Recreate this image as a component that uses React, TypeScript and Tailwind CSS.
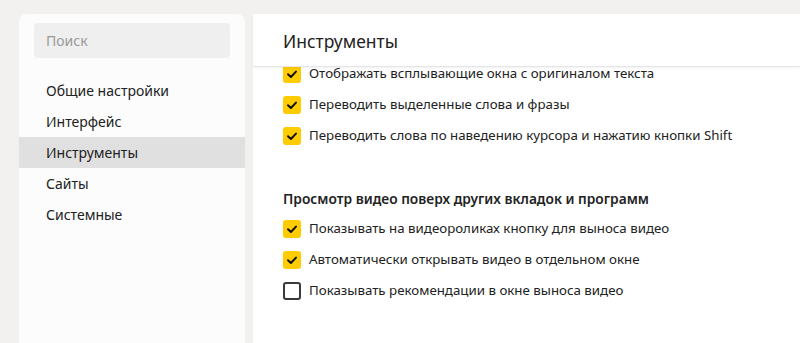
const nav = ["Общие настройки", "Интерфейс", "Инструменты", "Сайты", "Системные"];

const translate = [
  { label: "Отображать всплывающие окна с оригиналом текста", checked: true },
  { label: "Переводить выделенные слова и фразы", checked: true },
  { label: "Переводить слова по наведению курсора и нажатию кнопки Shift", checked: true },
];

const video = [
  { label: "Показывать на видеороликах кнопку для выноса видео", checked: true },
  { label: "Автоматически открывать видео в отдельном окне", checked: true },
  { label: "Показывать рекомендации в окне выноса видео", checked: false },
];

function Checkbox({ checked }: { checked: boolean }) {
  if (!checked) {
    return <span className="h-[18px] w-[18px] shrink-0 rounded-[3px] border-2 border-[#3a3a3a] bg-white" />;
  }
  return (
    <span className="flex h-[18px] w-[18px] shrink-0 items-center justify-center rounded-[3px] bg-[#ffcc00]">
      <svg viewBox="0 0 18 18" className="h-[18px] w-[18px]" aria-hidden>
        <path d="M5 9.2 L7.9 12 L13 6.6" fill="none" stroke="#111" strokeWidth="2" strokeLinecap="round" strokeLinejoin="round" />
      </svg>
    </span>
  );
}

function Row({ label, checked }: { label: string; checked: boolean }) {
  return (
    <label className="flex h-[31px] items-center gap-2">
      <Checkbox checked={checked} />
      <span className="whitespace-nowrap text-[13.3px] text-[#222]">{label}</span>
    </label>
  );
}

export default function App() {
  return (
    <div
      className="flex h-[343px] gap-2 overflow-hidden bg-[#f2f1ef] pl-[19px] pt-[14px]"
      style={{ fontFamily: '"Noto Sans", "Open Sans", sans-serif' }}
    >
      <aside className="flex w-[226px] shrink-0 flex-col rounded-t-lg bg-[#fcfcfc] pt-[9px]">
        <div className="mx-[15px] flex h-[35px] items-center rounded-[4px] bg-[#efefef] pl-3 text-[14px] text-[#9a9a9a]">
          Поиск
        </div>
        <nav className="mt-[17px] flex flex-col">
          {nav.map((item) => (
            <a
              key={item}
              href="#"
              className={
                "flex h-[31px] items-center pl-[27px] text-[14px] text-[#222] " +
                (item === "Инструменты" ? "bg-[#e0e0e0]" : "")
              }
            >
              {item}
            </a>
          ))}
        </nav>
      </aside>

      <main className="flex min-w-0 flex-1 flex-col rounded-tl-lg bg-white">
        <header className="relative z-10 flex h-[53px] shrink-0 items-center border-b border-[#e6e6e6] bg-white pl-[30px] pt-[3px] shadow-[0_1px_2px_rgba(0,0,0,0.06)]">
          <h1 className="text-[17.5px] text-[#222]">Инструменты</h1>
        </header>
        <div className="flex-1 overflow-hidden pl-[30px]">
          <div className="-mt-[9px]">
            {translate.map((r) => (
              <Row key={r.label} {...r} />
            ))}
            <h2 className="mt-[38px] mb-1 h-5 whitespace-nowrap text-[13.75px] font-semibold leading-5 text-[#222]">
              Просмотр видео поверх других вкладок и программ
            </h2>
            {video.map((r) => (
              <Row key={r.label} {...r} />
            ))}
          </div>
        </div>
      </main>
    </div>
  );
}
